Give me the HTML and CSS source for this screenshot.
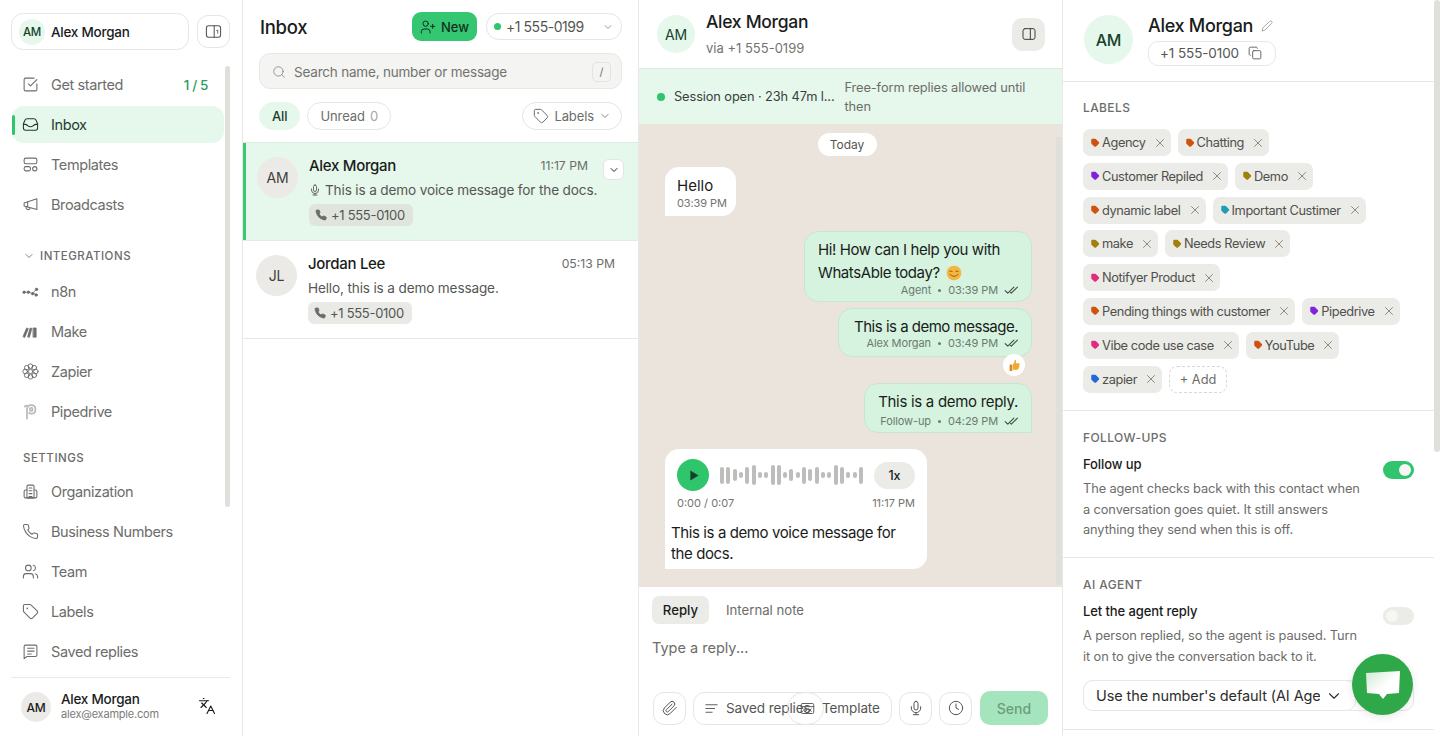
FILE: index.html
```html
<!DOCTYPE html>
<html lang="en">
<head>
<meta charset="UTF-8">
<title>Inbox</title>
<link rel="stylesheet" href="styles.css">
</head>
<body>

<svg class="sprite" xmlns="http://www.w3.org/2000/svg">
    <symbol id="i-check" viewBox="0 0 24 24"><path d="M21 11v8a2 2 0 0 1-2 2H5a2 2 0 0 1-2-2V5a2 2 0 0 1 2-2h12"/><path d="m9 11 3 3 9-9"/></symbol>
    <symbol id="i-inbox" viewBox="0 0 24 24"><path d="M7 4h10a3 3 0 0 1 2.7 1.7L22 11v6a3 3 0 0 1-3 3H5a3 3 0 0 1-3-3v-6l2.300-5.300A3 3 0 0 1 7 4z"/><path d="M2 11.500c3 0 5 .3 6.500 2.500 1.500 1.500 5.500 1.500 7 0 1.500-2.200 3.500-2.500 6.500-2.500"/></symbol>
    <symbol id="i-templates" viewBox="0 0 24 24"><rect x="3" y="3" width="18" height="8" rx="2.500"/><rect x="3" y="15" width="9" height="6" rx="2.500"/><circle cx="18" cy="18" r="3"/></symbol>
    <symbol id="i-megaphone" viewBox="0 0 24 24"><path d="m3 10 18-6v15L3 14z"/><path d="M11.600 17a3 3 0 1 1-5.800-1.600"/><path d="M8 8.500v7"/></symbol>
    <symbol id="i-building" viewBox="0 0 24 24"><path d="M7 21V5a2 2 0 0 1 2-2h6a2 2 0 0 1 2 2v16z"/><path d="M7 10H5a2 2 0 0 0-2 2v7a2 2 0 0 0 2 2h14a2 2 0 0 0 2-2v-7a2 2 0 0 0-2-2h-2"/><path d="M10 7h4M10 11h4M10 15h4M10 21v-2h4v2"/></symbol>
    <symbol id="i-phone" viewBox="0 0 24 24"><path d="M22 16.920v3a2 2 0 0 1-2.180 2 19.790 19.790 0 0 1-8.630-3.070 19.500 19.500 0 0 1-6-6 19.790 19.790 0 0 1-3.070-8.670A2 2 0 0 1 4.110 2h3a2 2 0 0 1 2 1.720 12.840 12.840 0 0 0 .7 2.810 2 2 0 0 1-.45 2.110L8.090 9.910a16 16 0 0 0 6 6l1.270-1.270a2 2 0 0 1 2.110-.45 12.840 12.840 0 0 0 2.810.7A2 2 0 0 1 22 16.920z"/></symbol>
    <symbol id="i-users" viewBox="0 0 24 24"><path d="M16 21v-2a4 4 0 0 0-4-4H6a4 4 0 0 0-4 4v2"/><circle cx="9" cy="7" r="4"/><path d="M22 21v-2a4 4 0 0 0-3-3.870"/><path d="M16 3.130a4 4 0 0 1 0 7.750"/></symbol>
    <symbol id="i-tag" viewBox="0 0 24 24"><path d="M12.586 2.586A2 2 0 0 0 11.172 2H4a2 2 0 0 0-2 2v7.172a2 2 0 0 0 .586 1.414l8.704 8.704a2.426 2.426 0 0 0 3.420 0l6.580-6.580a2.426 2.426 0 0 0 0-3.420z"/><circle cx="7.500" cy="7.500" r=".5"/></symbol>
    <symbol id="i-note" viewBox="0 0 24 24"><path d="M21 17a2 2 0 0 1-2 2H7l-4 3V5a2 2 0 0 1 2-2h14a2 2 0 0 1 2 2z"/><path d="M8 8h9M8 12h9M8 16h5" transform="translate(0 -.5)"/></symbol>
    <symbol id="i-lang" viewBox="0 0 24 24"><path d="m5 8 6 6"/><path d="m4 14 6-6 2-3"/><path d="M2 5h12"/><path d="M7 2h1"/><path d="m22 22-5-10-5 10"/><path d="M14 18h6"/></symbol>
    <symbol id="i-mic" viewBox="0 0 24 24"><path d="M12 2a3 3 0 0 0-3 3v7a3 3 0 0 0 6 0V5a3 3 0 0 0-3-3Z"/><path d="M19 10v2a7 7 0 0 1-14 0v-2"/><path d="M12 19v3M8 22h8"/></symbol>
    <symbol id="i-clip" viewBox="0 0 24 24"><path d="m21.440 11.050-9.190 9.190a6 6 0 0 1-8.490-8.490l8.570-8.570A4 4 0 1 1 18 8.840l-8.590 8.570a2 2 0 0 1-2.830-2.830l8.490-8.480"/></symbol>
    <symbol id="i-clock" viewBox="0 0 24 24"><circle cx="12" cy="12" r="10"/><path d="M12 6v6l4 2"/></symbol>
    <symbol id="i-search" viewBox="0 0 24 24"><circle cx="11" cy="11" r="8"/><path d="m21 21-4.300-4.300"/></symbol>
    <symbol id="i-userplus" viewBox="0 0 24 24"><path d="M15 21v-2a4 4 0 0 0-4-4H6a4 4 0 0 0-4 4v2"/><circle cx="8.500" cy="7" r="4"/><path d="M19 8v6M22 11h-6"/></symbol>
    <symbol id="i-panel" viewBox="0 0 24 24"><rect x="3" y="4" width="18" height="16" rx="3"/><path d="M14 4v16"/></symbol>
    <symbol id="i-sidepanel" viewBox="0 0 24 24"><rect x="2" y="4" width="20" height="16" rx="3"/><path d="M13 4v16"/><path d="M16.500 10.500 18 10v4.500" stroke-width="1.200"/></symbol>
    <symbol id="i-pencil" viewBox="0 0 24 24"><path d="M17 3a2.850 2.830 0 1 1 4 4L7.500 20.500 2 22l1.500-5.500Z"/></symbol>
    <symbol id="i-copy" viewBox="0 0 24 24"><rect x="8" y="8" width="14" height="14" rx="2"/><path d="M4 16c-1.100 0-2-.9-2-2V4c0-1.100.9-2 2-2h10c1.100 0 2 .9 2 2"/></symbol>
    <symbol id="i-chev" viewBox="0 0 24 24"><path d="m6 9 6 6 6-6"/></symbol>
    <symbol id="i-x" viewBox="0 0 24 24"><path d="M18 6 6 18M6 6l12 12"/></symbol>
    <symbol id="i-read" viewBox="0 0 24 24"><path d="m2 13 4.500 4.500L17 7"/><path d="m11 16 1.500 1.500L23 7"/></symbol>
    <symbol id="i-lines" viewBox="0 0 24 24"><path d="M3 6h18M3 12h14M3 18h10"/></symbol>
    <symbol id="i-tpl" viewBox="0 0 24 24"><rect x="2" y="4" width="20" height="16" rx="2"/><path d="M2 9h20M7 13h3v3H7zM14 12.500l4 4M18 12.500l-4 4"/></symbol>
    <symbol id="i-n8n" viewBox="0 0 24 24"><circle cx="3" cy="13" r="1.800"/><circle cx="9" cy="13" r="1.800"/><circle cx="15" cy="15" r="1.800"/><circle cx="20.500" cy="9" r="1.800"/><circle cx="20" cy="17" r="1.800"/><path d="M5 13h2M11 13l2 1.500M16.500 13.500 19 10M17 15.500h1.500"/></symbol>
    <symbol id="i-make" viewBox="0 0 24 24"><path d="m1.500 19 5-12 2.500 1-5 12zM8 19l3.500-12 2.500.7L10.500 20zM16 7h4v13h-4z"/></symbol>
    <symbol id="i-zapier" viewBox="0 0 24 24"><circle cx="12" cy="4.500" r="3.300"/><circle cx="12" cy="19.500" r="3.300"/><circle cx="4.500" cy="12" r="3.300"/><circle cx="19.500" cy="12" r="3.300"/><circle cx="6.700" cy="6.700" r="3.300"/><circle cx="17.300" cy="6.700" r="3.300"/><circle cx="6.700" cy="17.300" r="3.300"/><circle cx="17.300" cy="17.300" r="3.300"/><circle cx="12" cy="12" r="3"/></symbol>
    <symbol id="i-pipe" viewBox="0 0 24 24"><path d="M7 22V9c0-3.500 2.500-6 6-6s6 2.500 6 6-2.500 6-6 6c-1.500 0-2.500-.5-3-1"/><path d="M11 9a2 2 0 1 1 4 0 2 2 0 1 1-4 0zM4 5c1-1 2-2 4-1"/></symbol>
    <symbol id="i-label" viewBox="0 0 24 24"><path d="M3 4.500A2.500 2.500 0 0 1 5.500 2h7a3 3 0 0 1 2.100.9l6.500 6.500a3 3 0 0 1 0 4.200l-6.500 6.500a3 3 0 0 1-4.200 0L3.900 14.100a3 3 0 0 1-.9-2.100z"/></symbol>
</svg>

<div class="app">

    <!-- sidebar -->
    <aside class="sidebar">
        <div class="side-top">
            <div class="org-chip">
                <span class="avatar avatar-green avatar-sm">AM</span>
                <span class="org-name">Alex Morgan</span>
            </div>
            <button class="side-toggle">
                <svg class="icon"><use href="#i-sidepanel"/></svg>
            </button>
        </div>

        <nav class="nav">
            <a class="nav-item"><svg class="icon"><use href="#i-check"/></svg>Get started<span class="nav-count">1 / 5</span></a>
            <a class="nav-item nav-active"><svg class="icon"><use href="#i-inbox"/></svg>Inbox</a>
            <a class="nav-item"><svg class="icon"><use href="#i-templates"/></svg>Templates</a>
            <a class="nav-item"><svg class="icon"><use href="#i-megaphone"/></svg>Broadcasts</a>

            <p class="nav-heading nav-heading-fold"><svg class="icon-xs"><use href="#i-chev"/></svg>INTEGRATIONS</p>
            <a class="nav-item"><svg class="icon icon-brand"><use href="#i-n8n"/></svg>n8n</a>
            <a class="nav-item"><svg class="icon icon-brand"><use href="#i-make"/></svg>Make</a>
            <a class="nav-item"><svg class="icon icon-zapier"><use href="#i-zapier"/></svg>Zapier</a>
            <a class="nav-item"><svg class="icon icon-pipe"><use href="#i-pipe"/></svg>Pipedrive</a>

            <p class="nav-heading">SETTINGS</p>
            <a class="nav-item"><svg class="icon"><use href="#i-building"/></svg>Organization</a>
            <a class="nav-item"><svg class="icon"><use href="#i-phone"/></svg>Business Numbers</a>
            <a class="nav-item"><svg class="icon"><use href="#i-users"/></svg>Team</a>
            <a class="nav-item"><svg class="icon"><use href="#i-tag"/></svg>Labels</a>
            <a class="nav-item"><svg class="icon"><use href="#i-note"/></svg>Saved replies</a>
            <div class="side-scroll"></div>
        </nav>

        <div class="side-user">
            <span class="avatar avatar-grey avatar-md">AM</span>
            <div class="side-user-text">
                <strong>Alex Morgan</strong>
                <small>alex@example.com</small>
            </div>
            <svg class="icon lang-icon"><use href="#i-lang"/></svg>
        </div>
    </aside>

    <!-- conversation list -->
    <section class="list">
        <div class="list-head">
            <h1>Inbox</h1>
            <button class="btn-new"><svg class="icon-sm"><use href="#i-userplus"/></svg>New</button>
            <div class="number-select">
                <span class="dot"></span>+1 555-0199
                <svg class="icon-xs"><use href="#i-chev"/></svg>
            </div>
        </div>
        <div class="search">
            <svg class="icon-search"><use href="#i-search"/></svg>
            <span>Search name, number or message</span>
            <kbd>/</kbd>
        </div>
        <div class="filters">
            <span class="pill pill-on">All</span>
            <span class="pill">Unread <em>0</em></span>
            <span class="pill pill-labels"><svg class="icon-sm"><use href="#i-tag"/></svg>Labels<svg class="icon-xs"><use href="#i-chev"/></svg></span>
        </div>

        <div class="conv conv-active">
            <span class="avatar avatar-grey avatar-lg">AM</span>
            <div class="conv-body">
                <div class="conv-top"><strong>Alex Morgan</strong><time>11:17 PM</time></div>
                <p class="conv-text"><svg class="icon-xs"><use href="#i-mic"/></svg>This is a demo voice message for the docs.</p>
                <span class="conv-num"><svg class="icon-xs phone-fill"><use href="#i-phone"/></svg>+1 555-0100</span>
            </div>
            <button class="conv-menu"><svg class="icon-xs"><use href="#i-chev"/></svg></button>
        </div>
        <div class="conv">
            <span class="avatar avatar-grey avatar-lg">JL</span>
            <div class="conv-body">
                <div class="conv-top"><strong>Jordan Lee</strong><time>05:13 PM</time></div>
                <p class="conv-text">Hello, this is a demo message.</p>
                <span class="conv-num"><svg class="icon-xs phone-fill"><use href="#i-phone"/></svg>+1 555-0100</span>
            </div>
        </div>
    </section>

    <!-- chat -->
    <section class="chat">
        <div class="chat-head">
            <span class="avatar avatar-green avatar-chat">AM</span>
            <div class="chat-title">
                <strong>Alex Morgan</strong>
                <small>via +1 555-0199</small>
            </div>
            <button class="chat-panel-btn"><svg class="icon-sm"><use href="#i-panel"/></svg></button>
        </div>
        <div class="session">
            <span class="dot"></span>
            <span class="session-main">Session open · 23h 47m l...</span>
            <span class="session-note">Free-form replies allowed until then</span>
        </div>

        <div class="messages">
            <div class="day">Today</div>
            <div class="msg msg-in msg-hello">
                <p>Hello</p>
                <small>03:39 PM</small>
            </div>
            <div class="msg msg-out msg-agent">
                <p>Hi! How can I help you with WhatsAble today?
                    <svg class="emoji" viewBox="0 0 24 24"><circle cx="12" cy="12" r="11" fill="#f4b63f"/><path d="M5.500 10c1-1.500 3-1.500 4 0M14.500 10c1-1.500 3-1.500 4 0" fill="none" stroke="#8a5a1a" stroke-width="1.500"/><path d="M6 14c2 4 10 4 12 0" fill="none" stroke="#8a5a1a" stroke-width="1.500"/></svg>
                </p>
                <div class="msg-meta">Agent<i></i>03:39 PM<svg class="read"><use href="#i-read"/></svg></div>
            </div>
            <div class="msg msg-out msg-demo">
                <p>This is a demo message.</p>
                <div class="msg-meta">Alex Morgan<i></i>03:49 PM<svg class="read"><use href="#i-read"/></svg></div>
                <span class="reaction"><svg viewBox="0 0 24 24"><path d="M9 10c2-2 3-4 3-7 0-1.500 3-1.500 3 1 0 2-.5 3-1 4h6c2 0 2 3 .5 3.500 1 1 .5 3-.5 3.300.5 1 0 2.700-1 3 .3 1-.5 2.200-2 2.200H9z" fill="#f0a92e"/><rect x="3" y="10" width="5" height="12" rx="1" fill="#d98a1f"/></svg></span>
            </div>
            <div class="msg msg-out msg-reply">
                <p>This is a demo reply.</p>
                <div class="msg-meta">Follow-up<i></i>04:29 PM<svg class="read"><use href="#i-read"/></svg></div>
            </div>
            <div class="msg msg-in msg-voice">
                <div class="voice-row">
                    <span class="play"><svg viewBox="0 0 24 24"><path d="M7 4v16l13-8z"/></svg></span>
                    <div class="wave">
                        <i class="b3"></i><i class="b3"></i><i class="b2"></i><i class="b0"></i><i class="b3"></i><i class="b4"></i><i class="b0"></i><i class="b0"></i><i class="b4"></i><i class="b4"></i><i class="b0"></i><i class="b2"></i><i class="b0"></i><i class="b3"></i><i class="b2"></i><i class="b3"></i><i class="b0"></i><i class="b0"></i><i class="b4"></i><i class="b3"></i><i class="b0"></i><i class="b0"></i><i class="b3"></i>
                    </div>
                    <span class="speed">1x</span>
                </div>
                <div class="voice-time"><span>0:00 / 0:07</span><span>11:17 PM</span></div>
                <p>This is a demo voice message for the docs.</p>
            </div>
            <div class="chat-scroll"></div>
        </div>

        <div class="composer">
            <div class="composer-tabs">
                <span class="tab tab-on">Reply</span>
                <span class="tab">Internal note</span>
            </div>
            <div class="composer-input">Type a reply...</div>
            <div class="composer-tools">
                <button class="tool"><svg class="icon-sm"><use href="#i-clip"/></svg></button>
                <button class="tool-text tool-saved"><svg class="icon-sm"><use href="#i-lines"/></svg>Saved replies</button>
                <button class="tool-text tool-template"><svg class="icon-sm"><use href="#i-tpl"/></svg>Template</button>
                <button class="tool"><svg class="icon-sm"><use href="#i-mic"/></svg></button>
                <button class="tool"><svg class="icon-sm"><use href="#i-clock"/></svg></button>
                <button class="send">Send</button>
            </div>
        </div>
    </section>

    <!-- contact details -->
    <aside class="details">
        <div class="contact">
            <span class="avatar avatar-green avatar-xl">AM</span>
            <div class="contact-info">
                <div class="contact-name">Alex Morgan <svg class="icon-xs"><use href="#i-pencil"/></svg></div>
                <span class="contact-phone">+1 555-0100 <svg class="icon-sm"><use href="#i-copy"/></svg></span>
            </div>
        </div>

        <div class="block block-labels">
            <h2>LABELS</h2>
            <div class="chips">
                <span class="chip"><svg class="tag c-orange"><use href="#i-label"/></svg>Agency<svg class="chip-x"><use href="#i-x"/></svg></span>
                <span class="chip"><svg class="tag c-orange"><use href="#i-label"/></svg>Chatting<svg class="chip-x"><use href="#i-x"/></svg></span>
                <span class="chip"><svg class="tag c-purple"><use href="#i-label"/></svg>Customer Repiled<svg class="chip-x"><use href="#i-x"/></svg></span>
                <span class="chip"><svg class="tag c-olive"><use href="#i-label"/></svg>Demo<svg class="chip-x"><use href="#i-x"/></svg></span>
                <span class="chip"><svg class="tag c-orange"><use href="#i-label"/></svg>dynamic label<svg class="chip-x"><use href="#i-x"/></svg></span>
                <span class="chip"><svg class="tag c-teal"><use href="#i-label"/></svg>Important Custimer<svg class="chip-x"><use href="#i-x"/></svg></span>
                <span class="chip"><svg class="tag c-olive"><use href="#i-label"/></svg>make<svg class="chip-x"><use href="#i-x"/></svg></span>
                <span class="chip"><svg class="tag c-olive"><use href="#i-label"/></svg>Needs Review<svg class="chip-x"><use href="#i-x"/></svg></span>
                <span class="chip"><svg class="tag c-pink"><use href="#i-label"/></svg>Notifyer Product<svg class="chip-x"><use href="#i-x"/></svg></span>
                <span class="chip"><svg class="tag c-orange"><use href="#i-label"/></svg>Pending things with customer<svg class="chip-x"><use href="#i-x"/></svg></span>
                <span class="chip"><svg class="tag c-purple"><use href="#i-label"/></svg>Pipedrive<svg class="chip-x"><use href="#i-x"/></svg></span>
                <span class="chip"><svg class="tag c-pink"><use href="#i-label"/></svg>Vibe code use case<svg class="chip-x"><use href="#i-x"/></svg></span>
                <span class="chip"><svg class="tag c-orange"><use href="#i-label"/></svg>YouTube<svg class="chip-x"><use href="#i-x"/></svg></span>
                <span class="chip"><svg class="tag c-blue"><use href="#i-label"/></svg>zapier<svg class="chip-x"><use href="#i-x"/></svg></span>
                <span class="chip-add">+ Add</span>
            </div>
        </div>

        <div class="block block-follow">
            <h2>FOLLOW-UPS</h2>
            <div class="setting">
                <div>
                    <h3>Follow up</h3>
                    <p>The agent checks back with this contact when a conversation goes quiet. It still answers anything they send when this is off.</p>
                </div>
                <span class="switch switch-on"></span>
            </div>
        </div>

        <div class="block block-agent">
            <h2>AI AGENT</h2>
            <div class="setting">
                <div>
                    <h3>Let the agent reply</h3>
                    <p>A person replied, so the agent is paused. Turn it on to give the conversation back to it.</p>
                </div>
                <span class="switch"></span>
            </div>
            <div class="agent-select">
                <div class="select-back"></div>
                <div class="select-front"><span>Use the number's default (AI Agent)</span><svg class="select-chev"><use href="#i-chev"/></svg></div>
            </div>
        </div>
        <div class="details-scroll"></div>
    </aside>

    <button class="fab">
        <svg viewBox="0 0 36 30"><defs><linearGradient id="fabfill" x1="0" y1="0" x2="1" y2="1"><stop offset="0" stop-color="#cfe8d2"/><stop offset=".55" stop-color="#fff"/></linearGradient></defs><path d="M1 3 35 1l-1 22-12 1-4 5-4-5-12-1z" fill="url(#fabfill)"/></svg>
    </button>
</div>

</body>
</html>
```

FILE: styles.css
```css
* {
    box-sizing: border-box;
}

html, body {
    margin: 0;
    height: 100%;
    overflow: hidden;
}

body {
    font-family: "Inter", "Liberation Sans", sans-serif;
    color: #191c1a;
    background: #fff;
    font-size: 14px;
}

.sprite {
    display: none;
}

svg {
    fill: none;
    stroke: currentColor;
    stroke-width: 2;
    stroke-linecap: round;
    stroke-linejoin: round;
    flex: none;
}

button {
    font-family: inherit;
    cursor: pointer;
}

.app {
    display: flex;
    height: 736px;
    position: relative;
    overflow: hidden;
}

.icon {
    width: 17px;
    height: 17px;
    stroke-width: 1.5;
}

.icon-sm {
    width: 16px;
    height: 16px;
    stroke-width: 1.5;
}

.icon-xs {
    width: 12px;
    height: 12px;
    stroke-width: 1.7;
}

/* Avatars */
.avatar {
    display: flex;
    align-items: center;
    justify-content: center;
    border-radius: 50%;
    flex: none;
    letter-spacing: -0.2px;
}

.avatar-green {
    background: #e6f7ec;
    color: #14432a;
}

.avatar-grey {
    background: #eceae6;
    color: #3d3f3d;
}

.avatar-sm {
    width: 26px;
    height: 26px;
    font-size: 11.500px;
    font-weight: 500;
}

.avatar-md {
    width: 30px;
    height: 30px;
    font-size: 12px;
    font-weight: 500;
    color: #191c1a;
}

.avatar-lg {
    width: 41px;
    height: 41px;
    font-size: 14px;
}

.avatar-chat {
    width: 38px;
    height: 38px;
    font-size: 14px;
}

.avatar-xl {
    width: 49px;
    height: 49px;
    font-size: 16px;
    font-weight: 500;
}

/* Sidebar */
.sidebar {
    width: 243px;
    flex: none;
    display: flex;
    flex-direction: column;
    border-right: 1px solid #e8e8e5;
    padding: 13px 12px 0 11px;
}

.side-top {
    display: flex;
    align-items: center;
    gap: 8px;
}

.org-chip {
    flex: 1;
    height: 37px;
    border: 1px solid #e5e5e2;
    border-radius: 12px;
    display: flex;
    align-items: center;
    padding-left: 7px;
    gap: 6px;
}

.org-name {
    font-weight: 500;
    font-size: 13.500px;
    letter-spacing: -0.25px;
}

.side-toggle {
    width: 33px;
    height: 33px;
    border: 1px solid #e5e5e2;
    background: #fff;
    border-radius: 11px;
    display: flex;
    align-items: center;
    justify-content: center;
    color: #555;
    padding: 0;
}

.nav {
    flex: 1;
    position: relative;
    padding-top: 16px;
}

.nav-item {
    display: flex;
    align-items: center;
    height: 37px;
    margin: 0 6px 3px 1px;
    padding-left: 10px;
    gap: 12px;
    color: #6c6d6a;
    font-size: 14.500px;
    letter-spacing: -0.4px;
    border-radius: 12px;
    position: relative;
}

.nav-count {
    margin-left: auto;
    margin-right: 16px;
    color: #2e9e5b;
    font-weight: 500;
    font-size: 13.500px;
}

.nav-active {
    background: #e6f7ec;
    color: #1d3d2b;
}

.nav-active::before {
    content: '';
    position: absolute;
    left: 0;
    top: 9px;
    bottom: 8px;
    width: 3px;
    border-radius: 2px;
    background: #2fc56b;
}

.nav-heading {
    margin: 21px 0 8px 12px;
    font-size: 11.500px;
    font-weight: 500;
    letter-spacing: 0.5px;
    color: #6c6d6a;
    height: 14px;
    line-height: 14px;
    display: flex;
    align-items: center;
}

.nav-heading-fold {
    margin: 26px 0 10px 12px;
    gap: 5px;
}

.icon-brand {
    fill: currentColor;
    stroke-width: 1;
}

.icon-zapier {
    stroke-width: 1.300;
}

.icon-pipe {
    color: #b9b9b6;
    stroke-width: 2.400;
}

.side-scroll {
    position: absolute;
    top: 16px;
    right: 0;
    width: 5px;
    height: 441px;
    border-radius: 3px;
    background: #dfdfdc;
}

.side-user {
    height: 59px;
    border-top: 1px solid #eceae6;
    display: flex;
    align-items: center;
    padding: 0 0 2px 10px;
    gap: 10px;
}

.side-user .avatar {
    margin-top: 2px;
}

.side-user-text {
    display: flex;
    flex-direction: column;
    flex: 1;
}

.side-user-text strong {
    font-size: 13.500px;
    font-weight: 500;
    letter-spacing: -0.25px;
    line-height: 16px;
}

.side-user-text small {
    font-size: 11px;
    letter-spacing: -0.2px;
    color: #7b7c79;
    line-height: 14px;
}

.lang-icon {
    width: 18px;
    height: 18px;
    margin-right: 14px;
    color: #191c1a;
}

/* Conversation list */
.list {
    width: 396px;
    flex: none;
    border-right: 1px solid #e8e8e5;
    display: flex;
    flex-direction: column;
}

.list-head {
    height: 53px;
    display: flex;
    align-items: center;
    padding: 0 16px 0 17px;
}

.list-head h1 {
    margin: 0 auto 0 0;
    font-size: 18.500px;
    font-weight: 500;
    letter-spacing: -0.3px;
}

.btn-new {
    width: 65px;
    height: 29px;
    margin-right: 9px;
    background: #34c671;
    border: none;
    border-radius: 9px;
    color: #10301f;
    display: flex;
    align-items: center;
    justify-content: center;
    gap: 5px;
    font-size: 13px;
    font-weight: 500;
    padding: 0;
}

.number-select {
    width: 136px;
    height: 27px;
    border: 1px solid #e5e5e2;
    border-radius: 13px;
    display: flex;
    align-items: center;
    padding: 0 7px;
    font-size: 14px;
    letter-spacing: -0.45px;
    color: #555653;
}

.number-select .dot {
    margin-right: 5px;
}

.number-select svg {
    margin-left: auto;
    color: #8a8b88;
}

.dot {
    width: 7px;
    height: 7px;
    border-radius: 50%;
    background: #2fc56b;
    flex: none;
}

.search {
    margin: 0 16px;
    height: 36px;
    background: #f4f4f2;
    border: 1px solid #e8e8e5;
    border-radius: 11px;
    display: flex;
    align-items: center;
    padding: 1px 10px 0 12px;
    gap: 8px;
    font-size: 13.500px;
    letter-spacing: -0.2px;
    color: #72736f;
}

.icon-search {
    width: 14px;
    height: 14px;
    stroke-width: 1.500;
    color: #8a8b88;
}

.search kbd {
    margin-left: auto;
    width: 19px;
    height: 20px;
    border: 1px solid #e3e3e0;
    border-radius: 5px;
    font-family: inherit;
    font-size: 11px;
    display: flex;
    align-items: center;
    justify-content: center;
}

.filters {
    display: flex;
    align-items: center;
    gap: 7px;
    padding: 13px 16px 12px;
    height: 53px;
}

.pill {
    height: 28px;
    border: 1px solid #e5e5e2;
    border-radius: 14px;
    padding: 0 12px;
    display: flex;
    align-items: center;
    font-size: 13px;
    letter-spacing: -0.1px;
    color: #6c6d6a;
}

.pill em {
    font-style: normal;
    margin-left: 5px;
    color: #a5a6a3;
}

.pill-on {
    background: #e6f7ec;
    border-color: #e6f7ec;
    color: #1d3d2b;
    font-weight: 500;
}

.pill-labels {
    margin-left: auto;
    gap: 5px;
    padding: 0 10px;
}

.conv {
    height: 98px;
    display: flex;
    padding: 13px 0 0 13px;
    border-bottom: 1px solid #e8e8e5;
    position: relative;
}

.conv .avatar {
    margin-top: 1px;
}

.conv-active {
    background: #e6f7ec;
    border-top: 1px solid #dcebe1;
    padding-left: 14px;
    height: 99px;
}

.conv-active::before {
    content: '';
    position: absolute;
    left: 0;
    top: 0;
    bottom: 0;
    width: 3px;
    background: #3cc775;
}

.conv-body {
    flex: 1;
    min-width: 0;
    margin-left: 11px;
    padding-right: 23px;
}

.conv-active .conv-body {
    padding-right: 50px;
}

.conv-top {
    display: flex;
    justify-content: space-between;
    align-items: center;
    height: 18px;
}

.conv-top strong {
    font-size: 15px;
    font-weight: 500;
    letter-spacing: -0.3px;
}

.conv-top time {
    font-size: 12.200px;
    color: #6c6d6a;
}

.conv-text {
    margin: 7px 0 5px;
    font-size: 13.600px;
    letter-spacing: -0.15px;
    color: #555653;
    white-space: nowrap;
    display: flex;
    align-items: center;
    gap: 4px;
    height: 18px;
}

.conv-num {
    display: inline-flex;
    align-items: center;
    gap: 4px;
    height: 22px;
    padding: 0 8px 0 6px;
    background: #e9e9e5;
    border-radius: 6px;
    font-size: 13px;
    letter-spacing: -0.3px;
    color: #555653;
}

.phone-fill {
    fill: #6c6d6a;
    stroke: #6c6d6a;
}

.conv-active .conv-num {
    background: #dfe5dd;
}

.conv-menu {
    position: absolute;
    right: 14px;
    top: 16px;
    width: 21px;
    height: 21px;
    border: 1px solid #e5e5e2;
    background: #fff;
    border-radius: 6px;
    padding: 0;
    display: flex;
    align-items: center;
    justify-content: center;
}

/* Chat */
.chat {
    width: 424px;
    flex: none;
    display: flex;
    flex-direction: column;
    border-right: 1px solid #e8e8e5;
}

.chat-head {
    height: 68px;
    display: flex;
    align-items: center;
    padding: 0 17px 0 18px;
    gap: 11px;
    flex: none;
}

.chat-title {
    flex: 1;
    display: flex;
    flex-direction: column;
    gap: 8px;
}

.chat-title strong {
    font-size: 17.500px;
    font-weight: 500;
    letter-spacing: -0.3px;
    line-height: 20px;
}

.chat-title small {
    font-size: 13px;
    color: #73746f;
    line-height: 16px;
}

.chat-panel-btn {
    width: 33px;
    height: 33px;
    background: #ebebe8;
    border: none;
    border-radius: 10px;
    padding: 0;
    display: flex;
    align-items: center;
    justify-content: center;
    color: #3d3f3d;
}

.session {
    height: 56px;
    flex: none;
    background: #e6f7ec;
    border-top: 1px solid #dfe8e2;
    display: flex;
    align-items: center;
    padding: 0 30px 0 18px;
    font-size: 12.800px;
    letter-spacing: -0.1px;
}

.session .dot {
    width: 8px;
    height: 8px;
}

.session-main {
    margin-left: 9px;
    color: #38403b;
    white-space: nowrap;
}

.session-note {
    margin-left: 10px;
    color: #6c6d6a;
    line-height: 19px;
}

.messages {
    flex: 1;
    background: #ebe4dd;
    position: relative;
    padding: 9px 30px 0 26px;
    display: flex;
    flex-direction: column;
    overflow: hidden;
}

.day {
    align-self: center;
    margin-right: 3px;
    flex: none;
    width: 59px;
    height: 23px;
    background: #fff;
    border-radius: 12px;
    text-align: center;
    line-height: 23px;
    font-size: 12px;
    color: #555653;
}

.msg {
    border-radius: 14px;
    font-size: 15px;
    line-height: 23px;
    letter-spacing: -0.4px;
    flex: none;
}

.msg p {
    margin: 0;
}

.msg-in {
    background: #fff;
    align-self: flex-start;
    border-bottom-left-radius: 0;
}

.msg-out {
    background: #d5f3df;
    border: 1px solid #c5e6d1;
    align-self: flex-end;
    text-align: right;
    padding: 6px 13px 3px;
    position: relative;
}

.msg-hello {
    width: 71px;
    height: 49px;
    margin-top: 11px;
    padding: 8px 0 0 12px;
}

.msg-hello p {
    line-height: 22px;
    letter-spacing: 0;
}

.msg-hello small {
    display: block;
    font-size: 11px;
    line-height: 13px;
    letter-spacing: -0.1px;
    color: #73746f;
    white-space: nowrap;
}

.msg-agent {
    width: 228px;
    height: 71px;
    margin-top: 15px;
    text-align: left;
    padding-top: 6px;
}

.msg-agent .msg-meta {
    margin-top: -1px;
}

.msg-demo {
    margin-top: 6px;
    height: 49px;
    width: 194px;
}

.msg-demo p {
    white-space: nowrap;
    letter-spacing: -0.5px;
}

.msg-demo .msg-meta {
    margin-top: -2px;
}

.msg-reply {
    margin-top: 26px;
    height: 50px;
    width: 168px;
    border-bottom-right-radius: 0;
}

.msg-reply p {
    letter-spacing: -0.3px;
}

.msg-reply .msg-meta {
    margin-top: 1px;
}

.msg-meta {
    display: flex;
    justify-content: flex-end;
    align-items: center;
    height: 14px;
    font-size: 11px;
    line-height: 14px;
    color: #6c7a70;
    letter-spacing: -0.1px;
}

.msg-meta i {
    width: 3px;
    height: 3px;
    border-radius: 50%;
    background: #6c7a70;
    margin: 0 7px;
}

.read {
    width: 14px;
    height: 14px;
    margin-left: 6px;
    stroke-width: 1.800;
    color: #3a4a40;
}

.emoji {
    width: 16px;
    height: 16px;
    vertical-align: -3px;
    stroke: none;
    margin-left: 2px;
}

.reaction {
    position: absolute;
    right: 6px;
    bottom: -20px;
    width: 22px;
    height: 22px;
    background: #fff;
    border-radius: 50%;
    display: flex;
    align-items: center;
    justify-content: center;
}

.reaction svg {
    width: 13px;
    height: 13px;
    stroke: none;
}

.msg-voice {
    width: 262px;
    height: 120px;
    margin-top: 16px;
    padding: 10px 12px 0 6px;
}

.voice-row {
    display: flex;
    align-items: center;
    padding-left: 6px;
}

.play {
    width: 32px;
    height: 32px;
    background: #2fc56b;
    border-radius: 50%;
    display: flex;
    align-items: center;
    justify-content: center;
    flex: none;
}

.play svg {
    width: 15px;
    height: 15px;
    fill: #17402a;
    stroke: none;
}

.wave {
    display: flex;
    align-items: center;
    justify-content: space-between;
    margin-left: 11px;
    width: 143px;
}

.wave i {
    width: 4px;
    background: #bdbdbb;
    border-radius: 2px;
    flex: none;
}

.b0 { height: 6px; }
.b2 { height: 12px; }
.b3 { height: 17px; }
.b4 { height: 20px; }

.speed {
    margin-left: auto;
    width: 41px;
    height: 27px;
    background: #ebebe8;
    border-radius: 14px;
    display: flex;
    align-items: center;
    justify-content: center;
    font-size: 12.500px;
    font-weight: 500;
    letter-spacing: 0;
}

.voice-time {
    display: flex;
    justify-content: space-between;
    padding-left: 6px;
    margin-top: 5px;
    font-size: 11px;
    line-height: 14px;
    letter-spacing: 0;
    color: #73746f;
}

.msg-voice p {
    margin-top: 12px;
    line-height: 21px;
}

.chat-scroll {
    position: absolute;
    right: 0;
    top: 13px;
    bottom: 2px;
    width: 6px;
    background: #e0dfdc;
}

.composer {
    height: 149px;
    flex: none;
    padding: 9px 14px 0 14px;
    display: flex;
    flex-direction: column;
}

.composer-tabs {
    display: flex;
    align-items: center;
    gap: 9px;
    margin-left: -1px;
}

.tab {
    height: 28px;
    padding: 0 8px;
    line-height: 28px;
    border-radius: 7px;
    font-size: 13.200px;
    color: #6c6d6a;
    letter-spacing: 0;
}

.tab-on {
    width: 57px;
    text-align: center;
    background: #ebebe8;
    color: #191c1a;
    font-weight: 500;
}

.composer-input {
    margin: 13px 0 0 -1px;
    height: 21px;
    line-height: 21px;
    font-size: 14.500px;
    color: #6c6d6a;
}

.composer-tools {
    margin-top: 33px;
    display: flex;
    align-items: center;
}

.tool {
    width: 33px;
    height: 33px;
    border: 1px solid #e5e5e2;
    border-radius: 11px;
    background: #fff;
    padding: 0;
    display: flex;
    align-items: center;
    justify-content: center;
    color: #555653;
    margin-right: 7px;
}

.tool-text {
    height: 33px;
    border: 1px solid #e5e5e2;
    border-radius: 16px;
    background: transparent;
    display: flex;
    align-items: center;
    color: #555653;
    font-size: 13.500px;
    letter-spacing: -0.1px;
    padding: 0;
    white-space: nowrap;
}

.tool-saved {
    width: 131px;
    border-radius: 12px 17px 17px 12px;
    padding-left: 10px;
    gap: 7px;
}

.tool-saved svg {
    width: 15px;
    height: 15px;
}

.tool-template {
    width: 105px;
    margin-left: -37px;
    margin-right: 7px;
    border-radius: 17px 12px 12px 17px;
    padding-left: 12px;
    gap: 7px;
}

.tool-template svg {
    width: 15px;
    height: 15px;
}

.send {
    width: 68px;
    height: 34px;
    margin-left: 1px;
    background: #a5e5bd;
    border: none;
    border-radius: 10px;
    font-size: 14px;
    font-weight: 500;
    color: #6a9c7e;
    padding: 0;
}

/* Contact details */
.details {
    flex: 1;
    position: relative;
    padding-right: 6px;
    overflow: hidden;
}

.contact {
    height: 82px;
    border-bottom: 1px solid #e8e8e5;
    display: flex;
    align-items: center;
    padding: 0 0 2px 21px;
    gap: 15px;
}

.contact-info {
    display: flex;
    flex-direction: column;
    align-items: flex-start;
    gap: 3px;
}

.contact-name {
    display: flex;
    align-items: center;
    gap: 8px;
    font-size: 18px;
    font-weight: 500;
    letter-spacing: -0.3px;
    line-height: 24px;
}

.contact-name svg {
    color: #8a8b88;
    stroke-width: 1.500;
}

.contact-phone {
    display: flex;
    align-items: center;
    gap: 9px;
    width: 128px;
    height: 25px;
    border: 1px solid #e8e8e5;
    border-radius: 10px;
    padding-left: 11px;
    font-size: 13.500px;
    letter-spacing: -0.1px;
    color: #555653;
}

.contact-phone svg {
    width: 14px;
    height: 14px;
}

.block {
    padding: 0 20px;
    border-bottom: 1px solid #e8e8e5;
}

.block h2 {
    margin: 0;
    font-size: 12px;
    font-weight: 500;
    letter-spacing: 0.4px;
    color: #6c6d6a;
    line-height: 14px;
}

.block-labels {
    height: 329px;
    padding-top: 19px;
}

.chips {
    display: flex;
    flex-wrap: wrap;
    gap: 6.800px 7px;
    margin-top: 14px;
}

.chip {
    height: 27px;
    background: #ebebe7;
    border-radius: 7px;
    display: flex;
    align-items: center;
    padding: 0 7px;
    font-size: 12.800px;
    letter-spacing: -0.4px;
    color: #4f504d;
    white-space: nowrap;
}

.tag {
    width: 10px;
    height: 10px;
    margin-right: 2px;
    stroke: none;
}

.c-orange { fill: #d1520f; }
.c-purple { fill: #7e22e0; }
.c-olive { fill: #a1800c; }
.c-teal { fill: #1e9eb0; }
.c-pink { fill: #e12c7d; }
.c-blue { fill: #2566d8; }

.chip-x {
    width: 14px;
    height: 14px;
    margin: 0 -3px 0 7px;
    stroke-width: 1.300;
    color: #6c6d6a;
}

.chip-add {
    width: 58px;
    height: 27px;
    border: 1px dashed #d8d8d5;
    border-radius: 8px;
    display: flex;
    align-items: center;
    justify-content: center;
    font-size: 12.800px;
    color: #6c6d6a;
}

.setting {
    display: flex;
    justify-content: space-between;
    align-items: flex-start;
    margin-top: 11px;
}

.setting h3 {
    margin: 0;
    font-size: 13px;
    font-weight: 500;
    line-height: 16px;
    letter-spacing: -0.1px;
}

.setting p {
    margin: 7px 0 0;
    font-size: 12.800px;
    line-height: 20.500px;
    letter-spacing: -0.1px;
    color: #6c6d6a;
    width: 280px;
}

.block-follow {
    height: 147px;
    padding-top: 20px;
}

.block-agent {
    height: 172px;
    padding-top: 20px;
}

.switch {
    width: 31px;
    height: 18px;
    border-radius: 9px;
    background: #ebebe8;
    position: relative;
    margin-top: 4px;
    flex: none;
}

.switch::after {
    content: '';
    position: absolute;
    top: 3px;
    left: 3px;
    width: 12px;
    height: 12px;
    border-radius: 50%;
    background: #f6f6f4;
}

.switch-on {
    background: #30c56d;
    margin-top: 5px;
}

.switch-on::after {
    left: 16px;
}

.agent-select {
    position: relative;
    margin-top: 13px;
    height: 31px;
}

.select-back {
    position: absolute;
    inset: 0;
    border: 1px solid #e8e8e5;
    border-radius: 10px;
}

.select-front {
    position: absolute;
    left: 0;
    top: 0;
    width: 273px;
    height: 31px;
    background: #fff;
    border: 1px solid #e8e8e5;
    border-radius: 10px;
    display: flex;
    align-items: center;
    padding: 0 12px;
    gap: 5px;
    font-size: 14.500px;
    letter-spacing: -0.1px;
    color: #2c2d2b;
}

.select-front span {
    flex: 1;
    overflow: hidden;
    white-space: nowrap;
}

.select-chev {
    width: 18px;
    height: 18px;
    stroke-width: 1.500;
}

.details-scroll {
    position: absolute;
    right: 0;
    top: 0;
    width: 6px;
    height: 452px;
    background: #dfdfdc;
    border-radius: 3px;
}

.fab {
    position: absolute;
    left: 1352px;
    top: 654px;
    width: 61px;
    height: 61px;
    border-radius: 50%;
    background: #2fa84a;
    border: none;
    padding: 0;
    display: flex;
    align-items: center;
    justify-content: center;
    box-shadow: 0 2px 8px rgba(0, 0, 0, 0.1);
}

.fab svg {
    width: 36px;
    height: 30px;
    stroke: none;
}
```
